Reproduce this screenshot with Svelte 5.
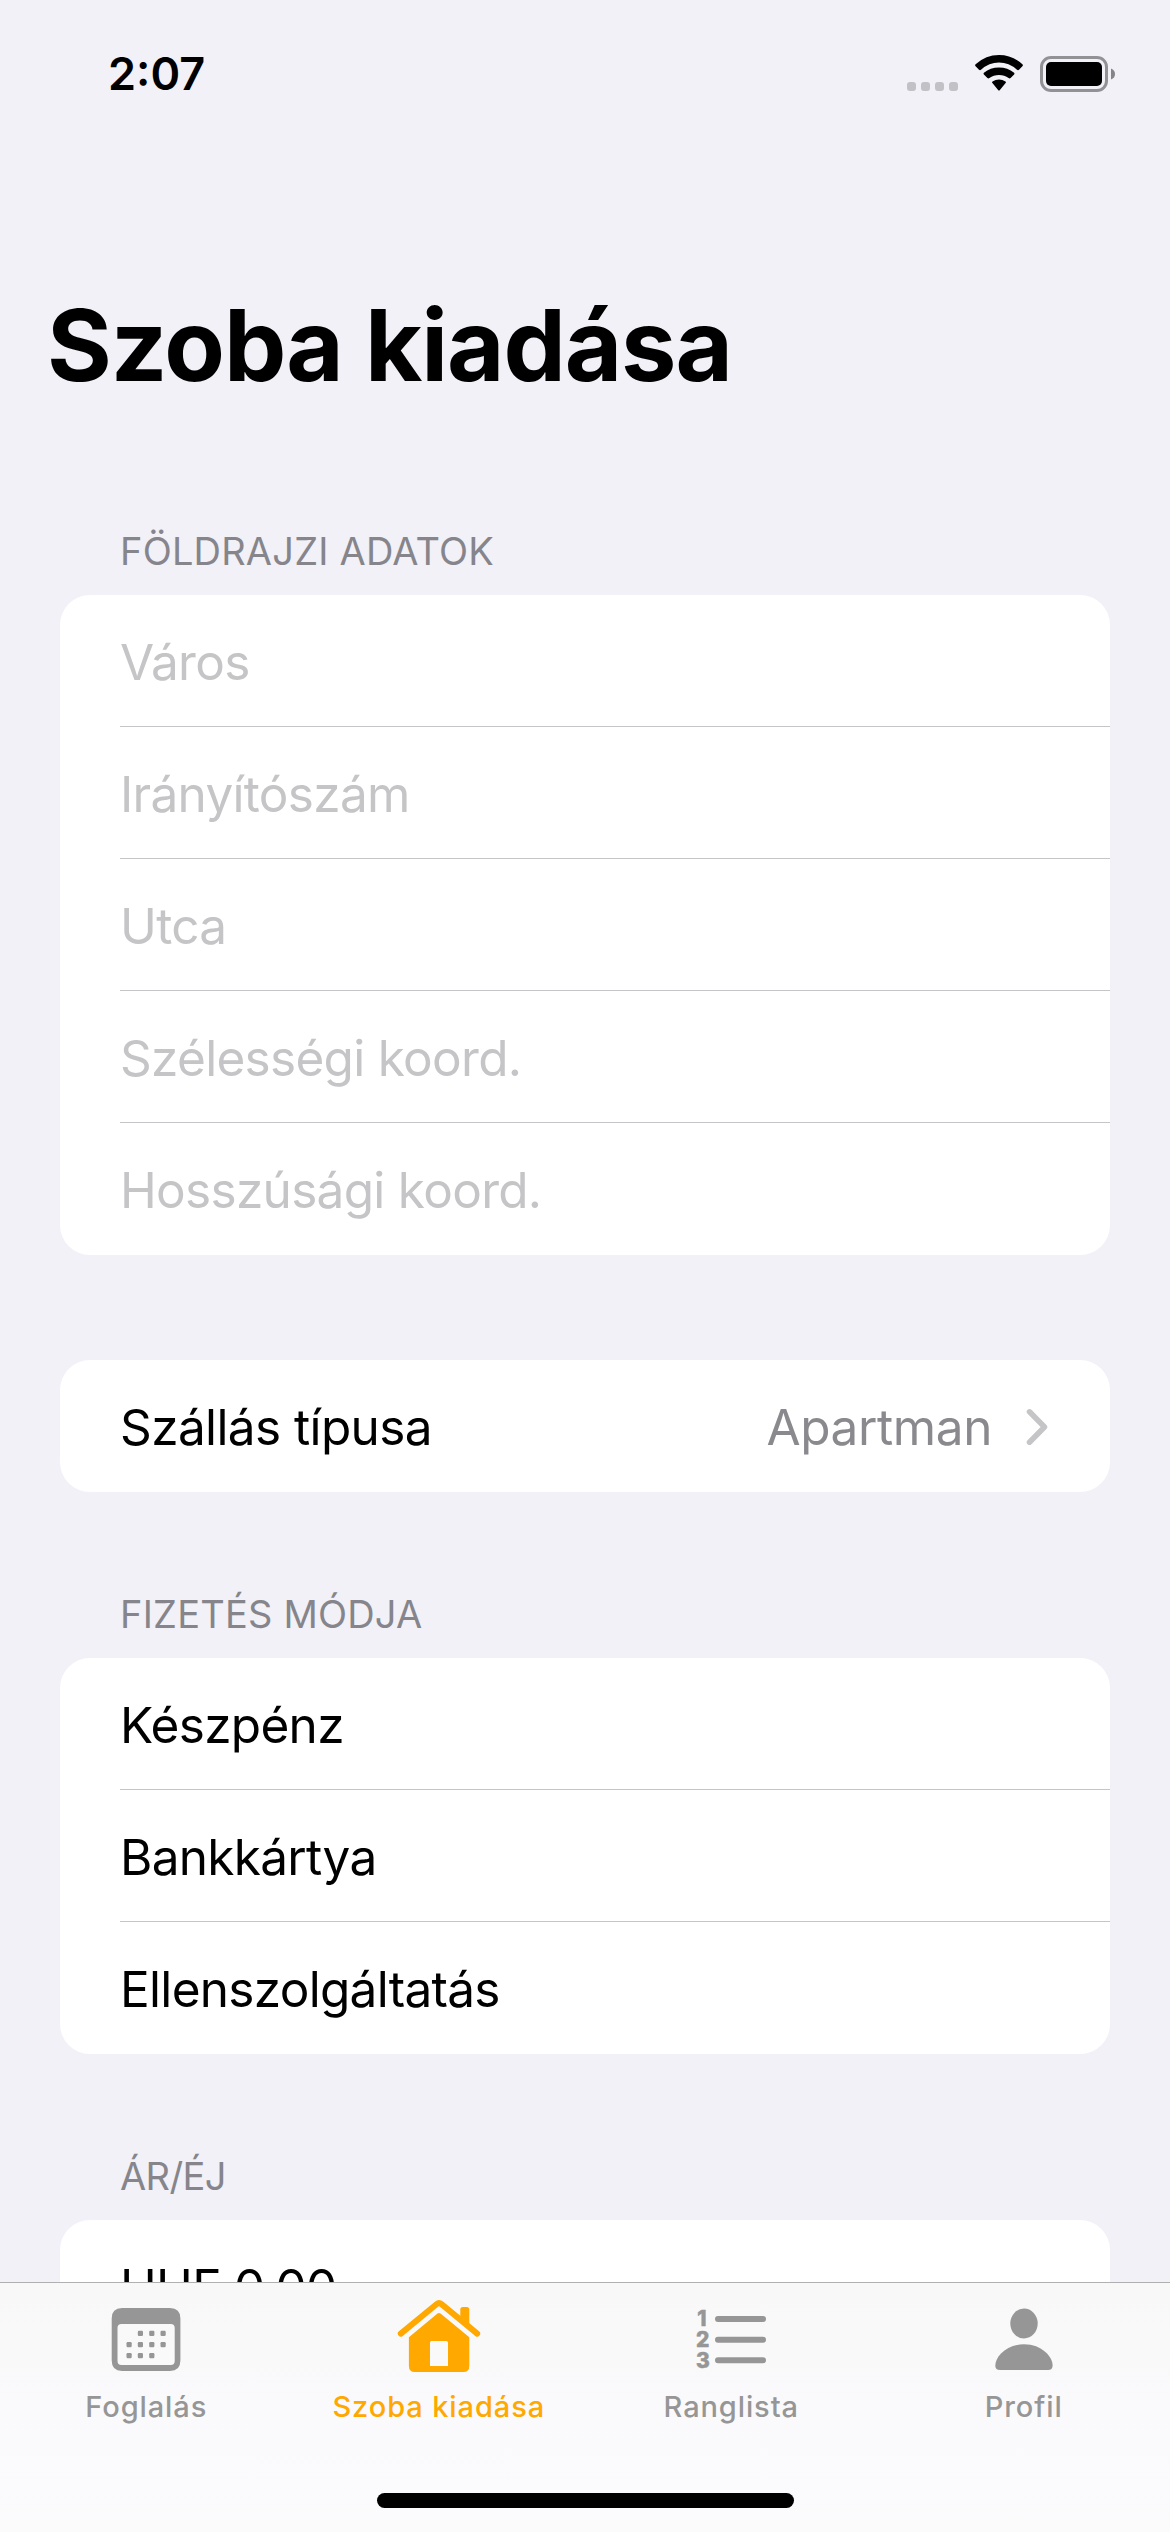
<script>
  const locationFields = [
    'Város',
    'Irányítószám',
    'Utca',
    'Szélességi koord.',
    'Hosszúsági koord.'
  ];
  const payments = ['Készpénz', 'Bankkártya', 'Ellenszolgáltatás'];
  const calendarDots = [
    [39.4, 37.3], [50.8, 37.3], [62.1, 37.3],
    [28.1, 48.7], [39.4, 48.7], [50.8, 48.7], [62.1, 48.7],
    [28.1, 59.7], [39.4, 59.7], [50.8, 59.7]
  ];
</script>

<div class="screen">
  <header class="status">
    <span class="time">2:07</span>
    <div class="indicators">
      <div class="dots"><i></i><i></i><i></i><i></i></div>
      <svg class="wifi" width="50" height="38" viewBox="0 0 50 38">
        <path d="M1.6 12.3Q.6 11.3 1.6 10.3Q11.800 1 25 1T48.400 10.300Q49.400 11.300 48.400 12.300L45 15.700Q44 16.600 43 15.700Q35 8.500 25 8.500T7 15.700Q6 16.600 5 15.700Z" />
        <path d="M9.900 20.600Q9 19.700 9.900 18.700Q16.300 13.500 25 13.500T40.100 18.700Q41 19.700 40.100 20.600L36.600 24.100Q35.600 25 34.600 24.100Q30.500 21 25 21T15.400 24.100Q14.400 25 13.400 24.100Z" />
        <path d="M18.400 29.100Q17.500 28.100 18.500 27.400Q21.500 25.500 25 25.500T31.500 27.400Q32.500 28.100 31.600 29.100L25.900 35.900Q25 36.900 24.100 35.900Z" />
      </svg>
      <svg class="battery" width="76" height="36" viewBox="0 0 76 36">
        <rect x="1.500" y="1.500" width="65" height="33" rx="9.500" fill="none" stroke="#929295" stroke-width="3" />
        <rect x="6" y="6" width="56" height="24" rx="5" />
        <path d="M71 12.500Q75 14 75 18T71 23.500Z" fill="#858588" />
      </svg>
    </div>
  </header>

  <h1>Szoba kiadása</h1>

  <main>
    <section class="first">
      <h2>FÖLDRAJZI ADATOK</h2>
      <div class="card">
        {#each locationFields as field}
          <div class="row placeholder"><span>{field}</span></div>
        {/each}
      </div>
    </section>

    <section class="plain">
      <div class="card">
        <div class="row picker">
          <span>Szállás típusa</span>
          <span class="value">Apartman</span>
          <svg width="22" height="38" viewBox="0 0 22 38">
            <path d="M3.500 3.800L18.500 19L3.500 34.200" fill="none" stroke="#c5c5c7" stroke-width="5.500" stroke-linecap="round" stroke-linejoin="round" />
          </svg>
        </div>
      </div>
    </section>

    <section>
      <h2>FIZETÉS MÓDJA</h2>
      <div class="card">
        {#each payments as payment}
          <div class="row"><span>{payment}</span></div>
        {/each}
      </div>
    </section>

    <section>
      <h2 class="tight">ÁR/ÉJ</h2>
      <div class="card">
        <div class="row"><span>HUF 0,00</span></div>
      </div>
    </section>
  </main>

  <nav>
    <div class="tabs">
      <div class="tab">
        <svg width="90" height="80" viewBox="0 0 90 80">
          <path fill-rule="evenodd" d="M21 12H69Q79.400 12 79.400 22.500V64.500Q79.400 75 69 75H21Q10.700 75 10.700 64.500V22.500Q10.700 12 21 12ZM20.500 28Q16.500 28 16.500 32V65Q16.500 69 20.500 69H69.700Q73.700 69 73.700 65V32Q73.700 28 69.700 28Z" />
          {#each calendarDots as [x, y]}
            <rect x={x - 2.6} y={y - 2.6} width="5.200" height="5.200" rx="1.200" />
          {/each}
        </svg>
        <span>Foglalás</span>
      </div>
      <div class="tab active">
        <svg width="90" height="80" viewBox="0 0 90 80">
          <path d="M6.800 37.600L42.500 8.200Q45 6.200 47.500 8.200L83.200 37.600" fill="none" stroke="currentColor" stroke-width="6" stroke-linecap="round" />
          <path d="M66.300 24V13.500Q66.300 11 68.800 11H72.800Q75.300 11 75.300 13.500V32Z" />
          <path fill-rule="evenodd" d="M14.900 41.300L43.500 17.500Q45 16.300 46.500 17.500L75.300 41.300V70Q75.300 76 69.300 76H20.900Q14.900 76 14.900 70ZM37.500 45Q36 45 36 46.500V70H54V46.500Q54 45 52.500 45Z" />
        </svg>
        <span>Szoba kiadása</span>
      </div>
      <div class="tab">
        <svg width="90" height="80" viewBox="0 0 90 80">
          <path d="M32 23H77M32 43.700H77M32 64.300H77" stroke="currentColor" stroke-width="6" stroke-linecap="round" />
          <g class="digits" text-anchor="middle">
            <text x="16" y="30">1</text>
            <text x="16.800" y="50.800">2</text>
            <text x="16.800" y="71.600">3</text>
          </g>
        </svg>
        <span>Ranglista</span>
      </div>
      <div class="tab">
        <svg width="90" height="80" viewBox="0 0 90 80">
          <ellipse cx="45" cy="27.500" rx="13.700" ry="15" />
          <path d="M21 74Q16.300 74 16.300 69.500C16.300 61 27 48.300 45 48.300S73.600 61 73.600 69.500Q73.600 74 69 74Z" />
        </svg>
        <span>Profil</span>
      </div>
    </div>
    <div class="home"></div>
  </nav>
</div>

<style>
  :global(body) {
    margin: 0;
    background: #f2f1f7;
  }
  .screen {
    width: 1170px;
    height: 2532px;
    overflow: hidden;
    position: relative;
    background: #f2f1f7;
    color: #000;
    font-family: Inter, 'Liberation Sans', sans-serif;
  }
  .status {
    height: 285px;
    box-sizing: border-box;
    padding: 47px 54px 0 108px;
    display: flex;
    justify-content: space-between;
    align-items: flex-start;
  }
  .time {
    font-size: 45px;
    line-height: 54px;
    font-weight: 600;
    letter-spacing: 0;
  }
  .indicators {
    display: flex;
    align-items: flex-start;
    padding-top: 7px;
  }
  .dots {
    display: flex;
    gap: 5px;
    padding: 28px 16px 0 0;
  }
  .dots i {
    width: 9px;
    height: 9px;
    border-radius: 3px;
    background: #c2c1c6;
  }
  .wifi {
    margin-right: 16px;
  }
  .battery {
    margin-top: 2px;
  }
  h1 {
    margin: 0 0 123px;
    padding-left: 47px;
    font-size: 99px;
    line-height: 120px;
    font-weight: 700;
    letter-spacing: -1.1px;
  }
  main {
    padding: 0 60px;
  }
  section {
    margin-top: 99px;
  }
  .first {
    margin-top: 0;
  }
  .plain {
    margin-top: 105px;
  }
  h2 {
    margin: 0 0 21px;
    padding-left: 60px;
    font-size: 38px;
    line-height: 46px;
    font-weight: 400;
    letter-spacing: 0.2px;
    color: #86858b;
  }
  .tight {
    letter-spacing: -0.6px;
  }
  .card {
    background: #fff;
    border-radius: 30px;
    overflow: hidden;
    padding-left: 60px;
  }
  .row {
    height: 132px;
    box-sizing: border-box;
    padding: 2px 60px 0 0;
    display: flex;
    align-items: center;
    font-size: 49.5px;
    line-height: 60px;
    letter-spacing: -0.7px;
    white-space: nowrap;
  }
  .row:not(:last-child) {
    box-shadow: inset 0 -1px #c5c5c7;
  }
  .placeholder {
    color: #c5c5c7;
  }
  .picker {
    padding-right: 62px;
    letter-spacing: -0.6px;
  }
  .value {
    margin-left: auto;
    margin-right: 34px;
    letter-spacing: -0.4px;
    color: #8a8a8e;
  }
  nav {
    position: absolute;
    left: 0;
    right: 0;
    bottom: 0;
    height: 250px;
    box-sizing: border-box;
    border-top: 1px solid #b0b0b2;
    background: linear-gradient(#f8f8f8, #fafafc 50%, #fbfbfc);
    display: flex;
    flex-direction: column;
    align-items: center;
  }
  .tabs {
    width: 100%;
    display: grid;
    grid-template-columns: repeat(4, 1fr);
    padding-top: 13px;
  }
  .tab {
    display: flex;
    flex-direction: column;
    align-items: center;
    gap: 13px;
    color: #969696;
    font-size: 29px;
    line-height: 36px;
    font-weight: 500;
    letter-spacing: 0.9px;
  }
  .tab svg {
    fill: currentColor;
  }
  .active {
    color: #ffa800;
  }
  .digits {
    font-size: 21px;
    font-weight: 800;
    letter-spacing: 0;
    stroke: currentColor;
    stroke-width: 0.5px;
  }
  .home {
    width: 417px;
    height: 15px;
    border-radius: 8px;
    background: #000;
    margin-top: auto;
    margin-bottom: 24px;
  }
</style>
